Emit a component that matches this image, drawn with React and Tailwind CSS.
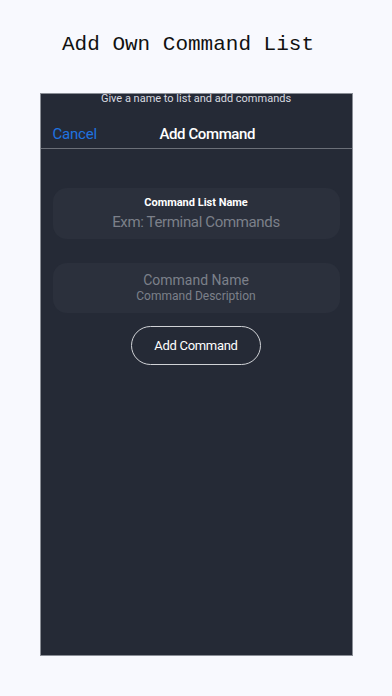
export default function App() {
  return (
    <div className="w-[392px] h-[696px] bg-[#f8f9fe] flex flex-col items-center overflow-hidden" style={{ fontFamily: "Roboto, 'Liberation Sans', sans-serif" }}>
      <h1 className="mt-[32px] pr-[16px] h-[26px] text-[21px] leading-[26px] text-[#111]" style={{ fontFamily: "'Liberation Mono', 'DejaVu Sans Mono', monospace" }}>
        Add Own Command List
      </h1>

      <div className="mt-[35px] w-[313px] h-[563px] bg-[#252a36] border border-[#8a8e96] flex flex-col">
        <p className="text-center text-[11px] leading-[11px] text-[#d8dae0] -mt-px">
          Give a name to list and add commands
        </p>

        <div className="relative h-[28px] mt-[16px] flex items-center">
          <span className="pl-[12px] text-[15px] tracking-[-0.2px] text-[#1f73e0]">Cancel</span>
          <span className="absolute left-[119px] text-[15px] tracking-[-0.4px] font-medium text-white">Add Command</span>
        </div>
        <div className="h-px bg-[#6b6f78]" />

        <div className="px-[12px] pt-[39px] flex flex-col">
          <div className="h-[51px] rounded-[14px] bg-[#2b303c] flex flex-col items-center justify-center">
            <span className="text-[11px] leading-[14px] font-bold text-white">Command List Name</span>
            <span className="text-[15px] leading-[20px] tracking-[-0.35px] text-[#7c808a] mt-[2px]">Exm: Terminal Commands</span>
          </div>

          <div className="mt-[24px] h-[50px] rounded-[14px] bg-[#2b303c] flex flex-col items-center justify-center">
            <span className="text-[14px] leading-[17px] text-[#7c808a]">Command Name</span>
            <span className="text-[12px] leading-[15px] text-[#7c808a]">Command Description</span>
          </div>

          <div className="mt-[13px] flex justify-center">
            <button className="w-[130px] h-[39px] rounded-full border border-[#d0d2d6] text-[13px] tracking-[-0.3px] text-white">
              Add Command
            </button>
          </div>
        </div>
      </div>
    </div>
  );
}
